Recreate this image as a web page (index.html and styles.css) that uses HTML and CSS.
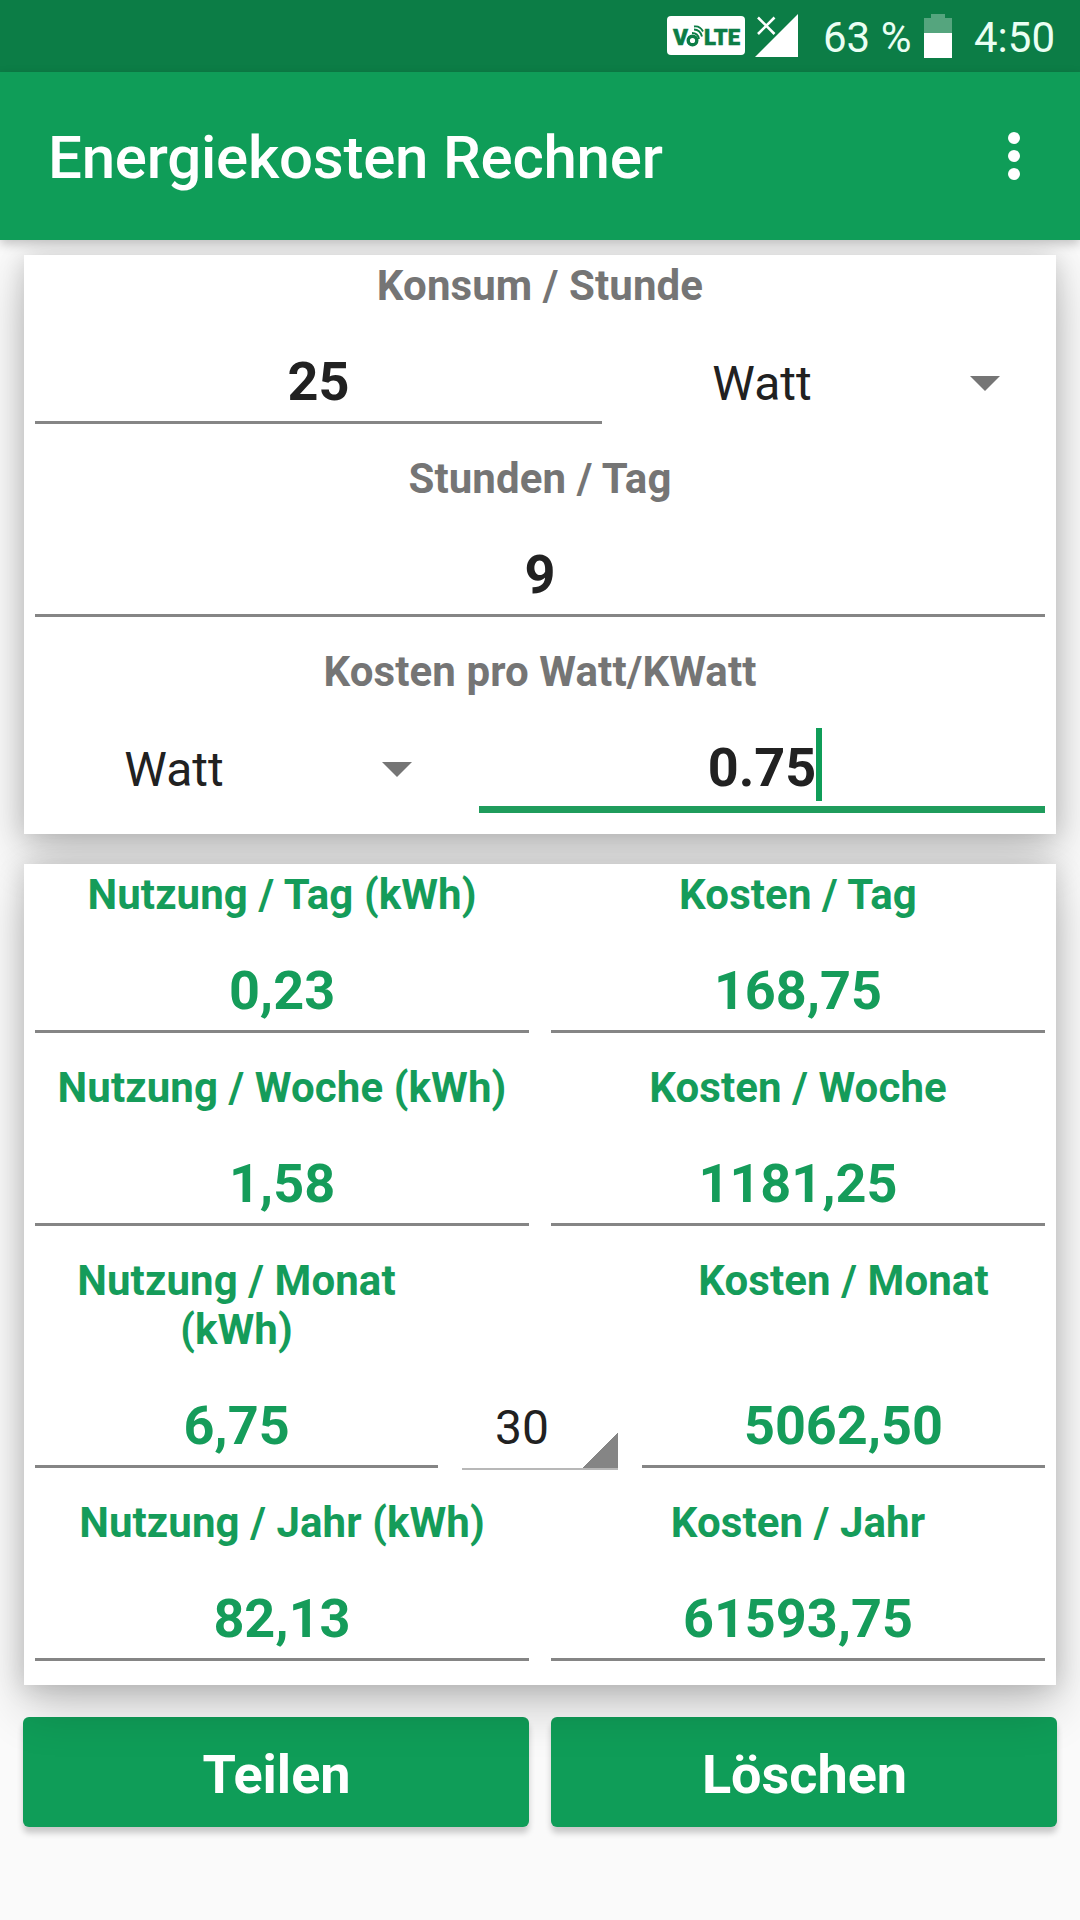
FILE: index.html
```
<!DOCTYPE html>
<html lang="de">
  <head>
    <meta charset="utf-8" />
    <meta name="viewport" content="width=device-width, initial-scale=1.0" />
    <title>Energiekosten Rechner</title>
    <link rel="stylesheet" href="styles.css">
  </head>

  <body>
    <!-- status bar -->
    <div class="status">
      <svg class="volte" width="78" height="39" viewBox="0 0 78 39">
        <rect width="78" height="39" rx="4" fill="#fff" />
        <g fill="#0c7d46" stroke="#0c7d46" stroke-width="0.500" font-family="Roboto, sans-serif" font-weight="900">
          <text x="6" y="29" font-size="22" textLength="15" lengthAdjust="spacingAndGlyphs">V</text>
          <text x="37" y="29" font-size="22" textLength="36" lengthAdjust="spacingAndGlyphs">LTE</text>
        </g>
        <g fill="none" stroke="#0c7d46">
          <circle cx="25.500" cy="24.500" r="4.300" stroke-width="3.400" />
          <path d="M25 17q6 0 7 6M27 13.500q6 0 8 7M27 10.500q6-1 9 5" stroke-width="1.900" />
        </g>
      </svg>
      <svg class="signal" width="44" height="44" viewBox="0 0 44 44">
        <path d="M43 0v43H0z" fill="#fff" />
        <path d="M3 3.500l16.500 16.500M19.500 3.500L3 20" stroke="#fff" stroke-width="2.600" />
      </svg>
      <span class="percent">63 %</span>
      <svg class="battery" width="28" height="44" viewBox="0 0 28 44">
        <path d="M7 0h14v4h7v15H0V4h7z" fill="#55a57e" />
        <path d="M0 19h28v25H0z" fill="#fff" />
      </svg>
      <span class="clock">4:50</span>
    </div>

    <header>
      <h1>Energiekosten Rechner</h1>
      <svg width="12" height="48" viewBox="0 0 12 48" fill="#fff">
        <circle cx="6" cy="6" r="6" />
        <circle cx="6" cy="24" r="6" />
        <circle cx="6" cy="42" r="6" />
      </svg>
    </header>

    <main>
      <!-- input -->
      <section class="card input">
        <h2>Konsum / Stunde</h2>
        <div class="row">
          <p class="field">25</p>
          <div class="spinner"><span>Watt</span><i class="arrow"></i></div>
        </div>
        <h2>Stunden / Tag</h2>
        <div class="row">
          <p class="field">9</p>
        </div>
        <h2>Kosten pro Watt/KWatt</h2>
        <div class="row">
          <div class="spinner"><span>Watt</span><i class="arrow"></i></div>
          <p class="field focus"><span class="value">0.75<i class="cursor"></i></span></p>
        </div>
      </section>

      <!-- result -->
      <section class="card result">
        <div class="cols">
          <div><h2>Nutzung / Tag (kWh)</h2><p class="field">0,23</p></div>
          <div><h2>Kosten / Tag</h2><p class="field">168,75</p></div>
        </div>
        <div class="cols">
          <div><h2>Nutzung / Woche (kWh)</h2><p class="field">1,58</p></div>
          <div><h2>Kosten / Woche</h2><p class="field">1181,25</p></div>
        </div>
        <div class="cols month">
          <div><h2>Nutzung / Monat (kWh)</h2><p class="field">6,75</p></div>
          <div class="days"><span>30</span></div>
          <div><h2>Kosten / Monat</h2><p class="field">5062,50</p></div>
        </div>
        <div class="cols">
          <div><h2>Nutzung / Jahr (kWh)</h2><p class="field">82,13</p></div>
          <div><h2>Kosten / Jahr</h2><p class="field">61593,75</p></div>
        </div>
      </section>

      <div class="buttons">
        <button>Teilen</button>
        <button>Löschen</button>
      </div>
    </main>
  </body>
</html>
```
FILE: styles.css
```
* {
  box-sizing: border-box;
}

body {
  margin: 0;
  height: 1920px;
  overflow: hidden;
  background-color: #fafafa;
  color: #212121;
  font-family: Roboto, sans-serif;
}

h1,
h2,
p {
  margin: 0;
}

/* status bar */

.status {
  display: flex;
  justify-content: flex-end;
  height: 72px;
  padding: 14px 24px 0 0;
  background-color: #0c7d46;
  color: #eafff3;
  font-size: 42px;
  line-height: 48px;
}

.volte {
  margin: 2px 10px 0 0;
}

.signal {
  margin-right: 24px;
}

.percent {
  width: 101px;
  white-space: nowrap;
}

.clock {
  width: 82px;
  margin-left: 22px;
}

header {
  position: relative;
  z-index: 3;
  display: flex;
  justify-content: space-between;
  align-items: center;
  height: 168px;
  padding: 0 60px 0 48px;
  background-color: #0f9d58;
  box-shadow: 0 4px 10px rgba(0, 0, 0, 0.22);
}

h1 {
  padding-top: 3px;
  color: white;
  font-size: 60px;
  font-weight: 500;
  letter-spacing: -0.23px;
}

/* cards */

main {
  padding: 15px 24px 0;
}

.card {
  position: relative;
  padding: 6px 11px 0;
  background-color: white;
  box-shadow: 0 2px 24px rgba(0, 0, 0, 0.17), 0 22px 48px rgba(0, 0, 0, 0.2);
}

.input {
  height: 579px;
  margin-bottom: 30px;
}

.result {
  z-index: 2;
  height: 821px;
}

h2 {
  color: #757575;
  font-size: 42px;
  font-weight: bold;
  letter-spacing: 0.1px;
  line-height: 49px;
  text-align: center;
}

.field {
  flex: 1;
  height: 74px;
  margin: 40px 0 30px;
  border-bottom: 3px solid #858585;
  font-size: 54px;
  font-weight: bold;
  line-height: 63px;
  text-align: center;
}

.row {
  display: flex;
}

.row .field:first-child:not(:last-child) {
  flex: 0 0 567px;
}

.spinner {
  display: flex;
  align-items: center;
  width: 444px;
  height: 63px;
  margin-top: 40px;
  font-size: 48px;
}

.field + .spinner {
  margin-left: 22px;
}

.spinner:first-child {
  padding-left: 1px;
}

.spinner span {
  width: 276px;
  padding-top: 4px;
  text-align: center;
}

.arrow {
  margin: 4px 0 0 70px;
  border: 15px solid transparent;
  border-top-color: #757575;
  border-bottom: 0;
}

.field.focus {
  height: 77px;
  border-bottom: 7px solid #1f9c5c;
}

.value {
  position: relative;
}

.cursor {
  position: absolute;
  top: -8px;
  right: -6px;
  width: 6px;
  height: 73px;
  background-color: #0f9d58;
}

.result h2,
.result .field {
  color: #159c5a;
}

.result .field {
  height: 74px;
}

.cols {
  display: grid;
  grid-template-columns: 494px 494px;
  column-gap: 22px;
}

.month {
  grid-template-columns: 403px 156px 403px;
  column-gap: 24px;
}

.month > div {
  display: flex;
  flex-direction: column;
  justify-content: space-between;
}

.month .field {
  flex: none;
}

.month .days {
  align-self: end;
  justify-content: center;
  height: 70px;
  margin-bottom: 28px;
  padding-right: 36px;
  border-bottom: 2px solid #b8b8b8;
  background: linear-gradient(135deg, transparent 50%, #858585 50%) right bottom / 36px 36px no-repeat;
  font-size: 48px;
  line-height: 56px;
  text-align: center;
}

.days span {
  margin-top: -12px;
}

/* buttons */

.buttons {
  display: flex;
  gap: 22px;
  margin: 32px -1px 0;
}

button {
  flex: 1;
  height: 110px;
  padding: 4px 0 0 1px;
  border: 0;
  border-radius: 6px;
  background-color: #0f9d58;
  box-shadow: 0 6px 6px rgba(0, 0, 0, 0.2);
  color: white;
  font-family: Roboto, sans-serif;
  font-size: 54px;
  font-weight: bold;
}
```
